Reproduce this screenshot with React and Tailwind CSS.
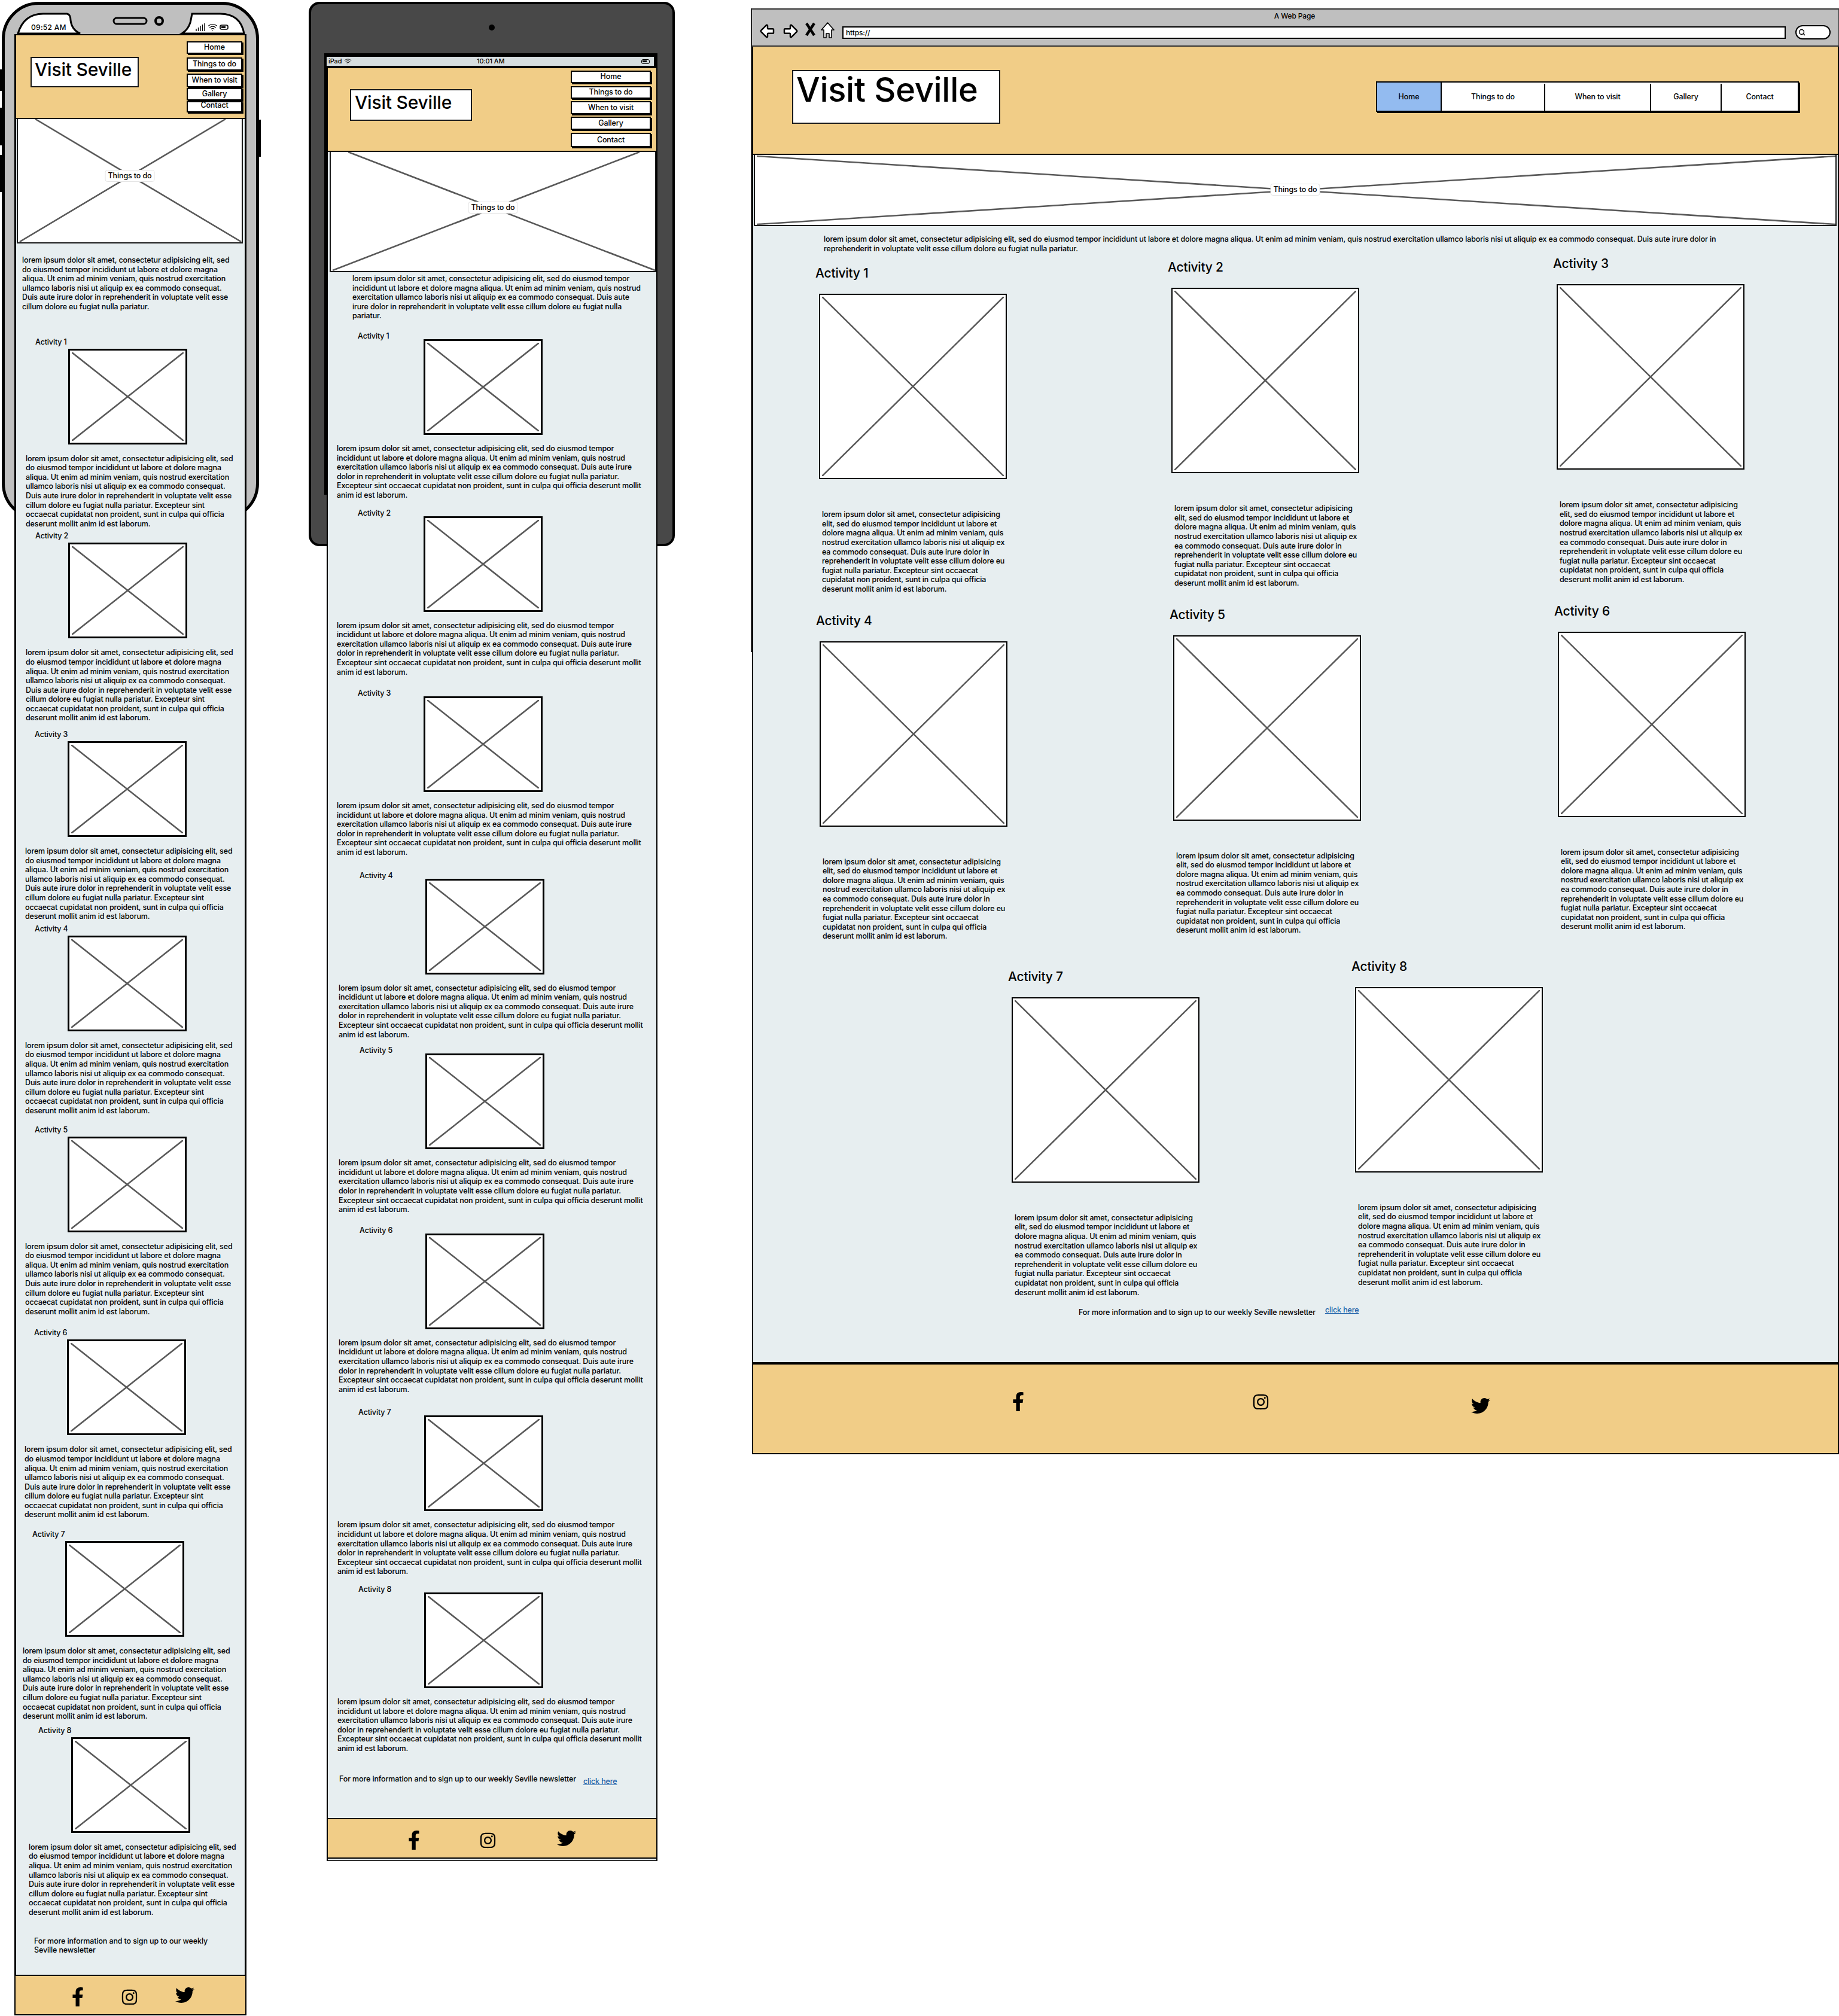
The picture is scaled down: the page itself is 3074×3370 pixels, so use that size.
import { ArrowBigLeft, ArrowBigRight, Search, Wifi } from 'lucide-react';
import { FaFacebookF, FaInstagram, FaTwitter } from 'react-icons/fa';

const PHONE_LINES = [
  'lorem ipsum dolor sit amet, consectetur adipisicing elit, sed',
  'do eiusmod tempor incididunt ut labore et dolore magna',
  'aliqua. Ut enim ad minim veniam, quis nostrud exercitation',
  'ullamco laboris nisi ut aliquip ex ea commodo consequat.',
  'Duis aute irure dolor in reprehenderit in voluptate velit esse',
  'cillum dolore eu fugiat nulla pariatur. Excepteur sint',
  'occaecat cupidatat non proident, sunt in culpa qui officia',
  'deserunt mollit anim id est laborum.',
];
const TABLET_LINES = [
  'lorem ipsum dolor sit amet, consectetur adipisicing elit, sed do eiusmod tempor',
  'incididunt ut labore et dolore magna aliqua. Ut enim ad minim veniam, quis nostrud',
  'exercitation ullamco laboris nisi ut aliquip ex ea commodo consequat. Duis aute irure',
  'dolor in reprehenderit in voluptate velit esse cillum dolore eu fugiat nulla pariatur.',
  'Excepteur sint occaecat cupidatat non proident, sunt in culpa qui officia deserunt mollit',
  'anim id est laborum.',
];
const DESKTOP_LINES = [
  'lorem ipsum dolor sit amet, consectetur adipisicing',
  'elit, sed do eiusmod tempor incididunt ut labore et',
  'dolore magna aliqua. Ut enim ad minim veniam, quis',
  'nostrud exercitation ullamco laboris nisi ut aliquip ex',
  'ea commodo consequat. Duis aute irure dolor in',
  'reprehenderit in voluptate velit esse cillum dolore eu',
  'fugiat nulla pariatur. Excepteur sint occaecat',
  'cupidatat non proident, sunt in culpa qui officia',
  'deserunt mollit anim id est laborum.',
];

const PHONE_ACTIVITIES = [
  { n: 1, cls: 'mt-[43px]' },
  { n: 2, cls: 'mt-[5px]' },
  { n: 3, cls: 'mt-[12px] -ml-[1px]' },
  { n: 4, cls: 'mt-[5px] -ml-[1px]' },
  { n: 5, cls: 'mt-[16px] -ml-[1px]' },
  { n: 6, cls: 'mt-[20px] -ml-[2px]' },
  { n: 7, cls: 'mt-[17px] -ml-[5px]' },
  { n: 8, cls: 'mt-[8px] ml-[5px]' },
];
const TABLET_ACTIVITIES = [
  { n: 1, cls: 'mt-[18px]' },
  { n: 2, cls: 'mt-[14px]' },
  { n: 3, cls: 'mt-[20px]' },
  { n: 4, cls: 'mt-[23px] ml-[3px]' },
  { n: 5, cls: 'mt-[11px] ml-[3px]' },
  { n: 6, cls: 'mt-[19px] ml-[3px]' },
  { n: 7, cls: 'mt-[23px] ml-[1px]' },
  { n: 8, cls: 'mt-[14px] ml-[1px]' },
];

function Lines({ lines, className = '' }) {
  return (
    <div className={`whitespace-nowrap leading-[15.6px] ${className}`}>
      {lines.map((line) => (
        <div key={line}>{line}</div>
      ))}
    </div>
  );
}

function Placeholder({ className = '' }) {
  return (
    <div className={`relative shrink-0 bg-white border-black ${className}`}>
      <svg className="absolute inset-[3px] h-[calc(100%-6px)] w-[calc(100%-6px)]" viewBox="0 0 100 100" preserveAspectRatio="none">
        <line x1="0" y1="0" x2="100" y2="100" stroke="#595959" strokeWidth="2.6" vectorEffect="non-scaling-stroke" />
        <line x1="100" y1="0" x2="0" y2="100" stroke="#595959" strokeWidth="2.6" vectorEffect="non-scaling-stroke" />
      </svg>
    </div>
  );
}

function Hero({ className = '', lines, labelClass = '' }) {
  return (
    <div className={`relative shrink-0 overflow-hidden border-x-2 border-b-2 border-[#1a1a1a] bg-white ${className}`}>
      <svg className="absolute inset-0 h-full w-full">
        {lines.map((l, i) => (
          <line key={i} x1={l[0]} y1={l[1]} x2={l[2]} y2={l[3]} stroke="#595959" strokeWidth="2.6" />
        ))}
      </svg>
      <div className={`absolute left-1/2 flex h-[20px] -translate-x-1/2 items-center rounded-[4px] border border-[#e4e4e4] bg-white px-[4px] whitespace-nowrap ${labelClass}`}>
        Things to do
      </div>
    </div>
  );
}

function StackNav({ items, className = '' }) {
  return (
    <div className={`flex flex-col ${className}`}>
      {items.map(([label, cls]) => (
        <div
          key={label}
          className={`flex items-center justify-center border-2 border-black bg-white shadow-[2px_2px_0_#000] ${cls}`}
        >
          {label}
        </div>
      ))}
    </div>
  );
}

function Footer({ className = '', f, ig, tw }) {
  return (
    <div className={`flex shrink-0 items-start border-2 border-black bg-[#f1cd87] ${className}`}>
      <FaFacebookF size={32} className={`shrink-0 text-black ${f}`} />
      <FaInstagram size={29} className={`shrink-0 text-black ${ig}`} />
      <FaTwitter size={32} className={`shrink-0 text-black ${tw}`} />
    </div>
  );
}

function Phone() {
  return (
    <div className="absolute left-[3px] top-[3px] h-[867px] w-[430px]">
      {/* side buttons */}
      <div className="absolute -left-[3px] top-[113px] h-[36px] w-[4px] bg-black" />
      <div className="absolute -left-[3px] top-[177px] h-[63px] w-[4px] bg-black" />
      <div className="absolute -left-[3px] top-[256px] h-[62px] w-[4px] bg-black" />
      <div className="absolute -right-[3px] top-[197px] h-[62px] w-[4px] bg-black" />
      <div className="absolute inset-0 rounded-[62px] border-[5px] border-black bg-[#bfbfbf]" />
      {/* notch */}
      <svg className="absolute -left-[3px] -top-[3px]" width="436" height="60">
        <path d="M30 56 Q40 23 72 23 L112 23 Q118 24 118 34 Q120 50 134 56 Z" fill="#fff" stroke="#000" strokeWidth="3" />
        <path d="M408 56 Q402 23 368 23 L321 23 Q319 34 318 38 Q314 50 304 56 Z" fill="#fff" stroke="#000" strokeWidth="3" />
        <rect x="190" y="30" width="55" height="10" rx="5" fill="#bfbfbf" stroke="#000" strokeWidth="3" />
        <circle cx="266" cy="35" r="6" fill="#bfbfbf" stroke="#000" strokeWidth="4" />
        <g stroke="#000" strokeWidth="1.4">
          <line x1="328" y1="52" x2="328" y2="48" />
          <line x1="331.5" y1="52" x2="331.5" y2="46" />
          <line x1="335" y1="52" x2="335" y2="43" />
          <line x1="338.5" y1="52" x2="338.5" y2="41" />
          <line x1="342" y1="52" x2="342" y2="39" />
        </g>
        <rect x="368" y="42" width="13" height="7" rx="2.5" fill="#fff" stroke="#000" strokeWidth="1.6" />
        <rect x="370" y="44" width="7" height="3" fill="#000" />
      </svg>
      <div className="absolute left-[49px] top-[34px] text-[12px] leading-[18px] tracking-[0.3px]">09:52 AM</div>
      <Wifi size={17} strokeWidth={1.6} className="absolute left-[344px] top-[34px]" />

      {/* screen runs past the bottom of the device */}
      <div className="absolute left-[21px] top-[54px] flex h-[3312px] w-[388px] flex-col border-x-[3px] border-black bg-[#e7eef0]">
        <div className="flex h-[142px] shrink-0 items-start justify-between border-y-2 border-black bg-[#f1cd87]">
          <div className="ml-[24px] mt-[36px] h-[51px] w-[181px] border-2 border-[#1a1a1a] bg-white pl-[5px] text-[30px] leading-[38px] tracking-[-0.2px]">
            Visit Seville
          </div>
          <StackNav
            className="mr-[4px] mt-[10px] w-[93px]"
            items={[
              ['Home', 'h-[21px] mb-[6px]'],
              ['Things to do', 'h-[22px] mb-[5px]'],
              ['When to visit', 'h-[23px] mb-[1px]'],
              ['Gallery', 'h-[21px] mb-[1px]'],
              ['Contact', 'h-[19px] pb-[5px]'],
            ]}
          />
        </div>
        <Hero
          className="ml-[1px] h-[208px] w-[378px]"
          lines={[
            [3, 205, 347, 0],
            [373, 205, 29, 0],
          ]}
          labelClass="top-[85px]"
        />
        <Lines lines={PHONE_LINES.slice(0, 5).concat('cillum dolore eu fugiat nulla pariatur.')} className="ml-[10px] mt-[20px]" />
        {PHONE_ACTIVITIES.map((a) => (
          <div key={a.n} className={`flex shrink-0 flex-col items-start ${a.cls}`}>
            <div className="ml-[32px] h-[19px] leading-[16px]">Activity {a.n}</div>
            <Placeholder className="ml-[87px] h-[160px] w-[199px] border-[3px]" />
            <Lines lines={PHONE_LINES} className="ml-[16px] mt-[16px]" />
          </div>
        ))}
        <Lines
          lines={['For more information and to sign up to our weekly', 'Seville newsletter']}
          className="ml-[30px] mt-[32px]"
        />
        <div className="flex-1" />
        <Footer
          className="-mx-[3px] h-[68px]"
          f="ml-[88px] mt-[19px]"
          ig="ml-[56px] mt-[21px]"
          tw="ml-[62px] mt-[16px]"
        />
      </div>
    </div>
  );
}

function Tablet() {
  return (
    <div className="absolute left-[516px] top-[3px] h-[910px] w-[612px]">
      <div className="absolute inset-0 rounded-[18px] border-4 border-black bg-[#484848]" />
      <div className="absolute left-[301px] top-[38px] h-[10px] w-[10px] rounded-full bg-black" />
      <div className="absolute left-[26px] top-[86px] h-[738px] w-[557px] bg-black" />
      <div className="absolute left-[30px] top-[92px] flex h-[15px] w-[547px] items-center justify-between bg-[#d7dee0] px-[3px] text-[11px]">
        <div className="flex items-center gap-[4px]">
          iPad <Wifi size={13} strokeWidth={1.6} />
        </div>
        <div className="-ml-[20px]">10:01 AM</div>
        <div className="relative mr-[4px] h-[8px] w-[14px] rounded-[3px] border-[1.5px] border-black">
          <div className="m-[1px] h-[3px] w-[7px] bg-black" />
        </div>
      </div>

      <div className="absolute left-[30px] top-[109px] flex h-[2999px] w-[553px] flex-col border-x-2 border-black bg-[#e7eef0]">
        <div className="flex h-[142px] shrink-0 items-start justify-between border-y-2 border-black bg-[#f1cd87]">
          <div className="ml-[37px] mt-[35px] h-[53px] w-[204px] border-2 border-[#1a1a1a] bg-white pl-[6px] text-[30px] leading-[40px] tracking-[-0.2px]">
            Visit Seville
          </div>
          <StackNav
            className="mr-[9px] mt-[4px] w-[134px]"
            items={[
              ['Home', 'h-[21px] mb-[5px]'],
              ['Things to do', 'h-[21px] mb-[4px]'],
              ['When to visit', 'h-[22px] mb-[4px]'],
              ['Gallery', 'h-[22px] mb-[5px]'],
              ['Contact', 'h-[24px]'],
            ]}
          />
        </div>
        <Hero
          className="ml-[3px] h-[201px] w-[546px]"
          lines={[
            [3, 198, 516, 0],
            [542, 198, 29, 0],
          ]}
          labelClass="top-[83px]"
        />
        <Lines lines={[TABLET_LINES[0], TABLET_LINES[1], 'exercitation ullamco laboris nisi ut aliquip ex ea commodo consequat. Duis aute', 'irure dolor in reprehenderit in voluptate velit esse cillum dolore eu fugiat nulla', 'pariatur.']} className="ml-[41px] mt-[3px]" />
        {TABLET_ACTIVITIES.map((a) => (
          <div key={a.n} className={`flex shrink-0 flex-col items-start ${a.cls}`}>
            <div className="flex items-start">
              <div className="ml-[50px] w-[110px] leading-[16px]">Activity {a.n}</div>
              <Placeholder className="mt-[13px] h-[160px] w-[199px] border-[3px]" />
            </div>
            <Lines lines={TABLET_LINES} className="ml-[15px] mt-[15px]" />
          </div>
        ))}
        <div className="ml-[19px] mt-[36px] flex items-start whitespace-nowrap leading-[15.6px]">
          For more information and to sign up to our weekly Seville newsletter
          <a className="ml-[12px] mt-[4px] text-[#1a5ea8] underline">click here</a>
        </div>
        <div className="flex-1" />
        <Footer
          className="-mx-[2px] h-[68px]"
          f="ml-[128px] mt-[19px]"
          ig="ml-[93px] mt-[21px]"
          tw="ml-[101px] mt-[16px]"
        />
        <div className="h-[4px] shrink-0 border-b-2 border-[#333] bg-[#e7eef0]" />
      </div>
    </div>
  );
}

function DesktopCard({ n, cls }) {
  return (
    <div className={`flex w-[314px] shrink-0 flex-col items-start ${cls}`}>
      <div className="-ml-[6px] h-[28px] text-[21px] leading-[28px] tracking-[-0.2px] whitespace-nowrap">Activity {n}</div>
      <Placeholder className="mt-[20px] h-[310px] w-[314px] border-2" />
      <Lines lines={DESKTOP_LINES} className="ml-[5px] mt-[51px]" />
    </div>
  );
}

function Desktop() {
  return (
    <div className="absolute left-[1255px] top-[14px] flex w-[1819px] flex-col">
      <div className="absolute left-0 top-0 h-[1076px] w-[2px] bg-[#222]" />
      {/* browser chrome */}
      <div className="flex h-[64px] shrink-0 flex-col border-y-2 border-r border-[#333] bg-[#bfbfbf]">
        <div className="h-[21px] text-center text-[12px] leading-[22px]">A Web Page</div>
        <div className="flex items-start pl-[14px]">
          <ArrowBigLeft size={30} strokeWidth={2} fill="#fff" className="-mx-[1px] shrink-0" />
          <ArrowBigRight size={30} strokeWidth={2} fill="#fff" className="ml-[9px] -mr-[1px] shrink-0" />
          <svg width="17" height="24" viewBox="0 0 17 24" className="ml-[11px] shrink-0">
            <path d="M2 2 L15 22 M15 2 L2 22" stroke="#000" strokeWidth="4.5" />
          </svg>
          <svg width="23" height="27" viewBox="0 0 23 27" className="ml-[9px] shrink-0">
            <path d="M11.5 1 L22 13 H18 V26 H14 V19 H9 V26 H5 V13 H1 Z" fill="#fff" stroke="#000" strokeWidth="1.6" strokeLinejoin="round" />
          </svg>
          <div className="ml-[13px] mt-[7px] flex h-[21px] w-[1577px] shrink-0 items-center border-2 border-black bg-white pl-[4px] text-[12px]">
            https://
          </div>
          <div className="ml-[16px] mt-[5px] flex h-[24px] w-[59px] shrink-0 items-center rounded-full border-2 border-black bg-white pl-[3px]">
            <Search size={12} strokeWidth={3} />
          </div>
        </div>
      </div>

      <div className="ml-[2px] flex h-[2353px] shrink-0 flex-col border-x-2 border-black bg-[#e7eef0]">
        <div className="flex h-[181px] shrink-0 items-start justify-between border-b-2 border-black bg-[#f1cd87]">
          <div className="ml-[65px] mt-[39px] h-[90px] w-[348px] border-2 border-[#1a1a1a] bg-white pl-[5px] text-[56px] leading-[62px] tracking-[-0.3px]">
            Visit Seville
          </div>
          <div className="mr-[65px] mt-[58px] flex h-[51px] border-2 border-black bg-white pt-[2px] shadow-[2px_2px_0_#000]">
            <div className="-mt-[2px] flex w-[108px] items-center justify-center border-r-2 border-black bg-[#93bbf0] pt-[2px]">Home</div>
            <div className="flex w-[173px] items-center justify-center border-r-2 border-black">Things to do</div>
            <div className="flex w-[177px] items-center justify-center border-r-2 border-black">When to visit</div>
            <div className="flex w-[118px] items-center justify-center border-r-2 border-black">Gallery</div>
            <div className="flex w-[127px] items-center justify-center">Contact</div>
          </div>
        </div>
        <Hero
          className="ml-[1px] h-[119px] w-[1810px]"
          lines={[
            [3, 2, 1806, 116],
            [1806, 2, 3, 116],
          ]}
          labelClass="top-[48px]"
        />
        <Lines
          lines={[
            'lorem ipsum dolor sit amet, consectetur adipisicing elit, sed do eiusmod tempor incididunt ut labore et dolore magna aliqua. Ut enim ad minim veniam, quis nostrud exercitation ullamco laboris nisi ut aliquip ex ea commodo consequat. Duis aute irure dolor in',
            'reprehenderit in voluptate velit esse cillum dolore eu fugiat nulla pariatur.',
          ]}
          className="ml-[118px] mt-[14px]"
        />
        <div className="flex items-start">
          <DesktopCard n={1} cls="ml-[110px] mt-[20px]" />
          <DesktopCard n={2} cls="ml-[275px] mt-[10px]" />
          <DesktopCard n={3} cls="ml-[330px] mt-[4px]" />
        </div>
        <div className="flex items-start">
          <DesktopCard n={4} cls="ml-[111px] mt-[31px]" />
          <DesktopCard n={5} cls="ml-[277px] mt-[21px]" />
          <DesktopCard n={6} cls="ml-[329px] mt-[15px]" />
        </div>
        <div className="flex items-start">
          <DesktopCard n={7} cls="ml-[432px] mt-[46px]" />
          <DesktopCard n={8} cls="ml-[260px] mt-[29px]" />
        </div>
        <div className="ml-[544px] mt-[18px] flex items-start whitespace-nowrap leading-[15.6px]">
          For more information and to sign up to our weekly Seville newsletter
          <a className="ml-[16px] -mt-[4px] text-[#1a5ea8] underline">click here</a>
        </div>
        <div className="flex-1" />
        <Footer
          className="-mx-[2px] h-[154px] border-t-4"
          f="ml-[427px] mt-[46px]"
          ig="ml-[375px] mt-[48px]"
          tw="ml-[337px] mt-[53px]"
        />
      </div>
    </div>
  );
}

export default function App() {
  return (
    <div className="relative h-[3370px] w-[3074px] overflow-hidden bg-white font-['Inter',sans-serif] text-[12.5px] font-medium tracking-[-0.13px] text-black">
      <Phone />
      <Tablet />
      <Desktop />
    </div>
  );
}
